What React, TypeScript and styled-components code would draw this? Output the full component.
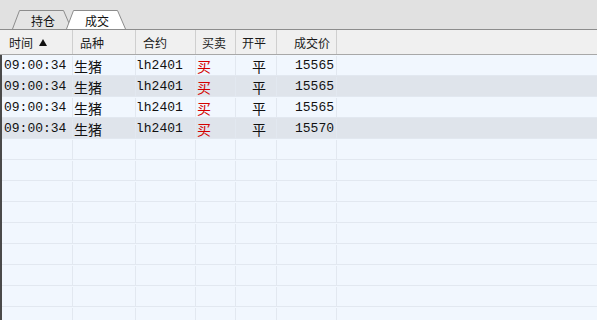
import styled, { createGlobalStyle } from "styled-components";

const GlobalStyle = createGlobalStyle`
  html, body {
    margin: 0;
    padding: 0;
    background: #eef5fd;
    overflow: hidden;
  }
  body {
    font-family: "Liberation Mono", "Noto Sans CJK SC", monospace;
  }
`;

const Panel = styled.div`
  width: 597px;
  height: 320px;
  display: flex;
  flex-direction: column;
  overflow: hidden;
`;

const TabBar = styled.div`
  height: 29px;
  background: #e1e1e1;
  border-bottom: 1px solid #8c8c8c;
  display: flex;
  align-items: flex-end;
  padding-left: 12px;
  box-sizing: content-box;
`;

const Tab = styled.div<{ $active?: boolean }>`
  position: relative;
  width: 60px;
  height: 19px;
  margin-right: -6px;
  z-index: ${(p) => (p.$active ? 2 : 1)};
  display: flex;
  align-items: center;
  justify-content: center;
  font-family: "Noto Sans CJK SC", sans-serif;
  font-size: 12px;
  color: #111;

  svg {
    position: absolute;
    inset: 0;
  }
  span {
    position: relative;
    top: 1px;
    left: 1px;
  }
`;

const TabShape = ({ active }: { active?: boolean }) => (
  <svg width="60" height="19" viewBox="0 0 60 19">
    <path
      d="M0.5 19 L7.5 0.5 L51.5 0.5 L59.5 19"
      fill={active ? "#ffffff" : "#e4e4e4"}
      stroke="#8c8c8c"
      strokeWidth="1"
    />
  </svg>
);

const HeaderRow = styled.div`
  display: flex;
  height: 24px;
  background: #f0f0f0;
  border-bottom: 1px solid #a8a8a8;
  font-family: "Noto Sans CJK SC", sans-serif;
  font-size: 12px;
  color: #1a1a1a;
`;

const HeadCell = styled.div<{ $w: number; $right?: boolean; $pl: number }>`
  width: ${(p) => p.$w}px;
  box-sizing: border-box;
  border-right: 1px solid #cfcfcf;
  display: flex;
  align-items: center;
  justify-content: ${(p) => (p.$right ? "flex-end" : "flex-start")};
  padding: 0 ${(p) => (p.$right ? "6px" : "0")} 0 ${(p) => p.$pl}px;
  gap: 6px;
`;

const Body = styled.div`
  flex: 1;
  border-left: 2px solid #4a4a4a;
  overflow: hidden;
`;

const Row = styled.div<{ $stripe?: boolean }>`
  display: flex;
  height: 21px;
  box-sizing: border-box;
  padding-top: 1px;
  border-bottom: 1px solid #e2e8f0;
  background: ${(p) => (p.$stripe ? "#dfe4eb" : "#f1f7fe")};
  font-size: 13px;
  color: #111;
`;

const Cell = styled.div<{
  $w: number;
  $align?: string;
  $red?: boolean;
  $cjk?: boolean;
  $pl: number;
}>`
  width: ${(p) => p.$w}px;
  box-sizing: border-box;
  border-right: 1px solid #e2e8f0;
  display: flex;
  align-items: center;
  justify-content: ${(p) => p.$align || "flex-start"};
  padding: 0 2px 0 ${(p) => p.$pl}px;
  font-size: ${(p) => (p.$cjk ? "14px" : "13px")};
  color: ${(p) => (p.$red ? "#d40000" : "inherit")};
  white-space: nowrap;
`;

const Filler = styled.div`
  flex: 1;
`;

const cols = [
  { key: "time", label: "时间", w: 73, align: "flex-start", pl: 2, hpl: 9, cjk: false },
  { key: "name", label: "品种", w: 63, align: "flex-start", pl: 1, hpl: 7, cjk: true },
  { key: "code", label: "合约", w: 60, align: "flex-start", pl: 0, hpl: 7, cjk: false },
  { key: "side", label: "买卖", w: 40, align: "flex-start", pl: 1, hpl: 6, cjk: true },
  { key: "open", label: "开平", w: 41, align: "center", pl: 8, hpl: 6, cjk: true },
  { key: "price", label: "成交价", w: 60, align: "flex-end", pl: 0, hpl: 0, cjk: false },
];

const trades = [
  { time: "09:00:34", name: "生猪", code: "lh2401", side: "买", open: "平", price: "15565" },
  { time: "09:00:34", name: "生猪", code: "lh2401", side: "买", open: "平", price: "15565" },
  { time: "09:00:34", name: "生猪", code: "lh2401", side: "买", open: "平", price: "15565" },
  { time: "09:00:34", name: "生猪", code: "lh2401", side: "买", open: "平", price: "15570" },
];

const SortUp = () => (
  <svg width="8" height="7" viewBox="0 0 8 7">
    <path d="M4 0 L8 7 L0 7 Z" fill="#111" />
  </svg>
);

const App = () => {
  const empty = Array.from({ length: 10 });
  return (
    <Panel>
      <GlobalStyle />
      <TabBar>
        <Tab>
          <TabShape />
          <span>持仓</span>
        </Tab>
        <Tab $active>
          <TabShape active />
          <span>成交</span>
        </Tab>
      </TabBar>
      <HeaderRow>
        {cols.map((c) => (
          <HeadCell key={c.key} $w={c.w} $pl={c.hpl} $right={c.key === "price"}>
            {c.label}
            {c.key === "time" && <SortUp />}
          </HeadCell>
        ))}
        <Filler />
      </HeaderRow>
      <Body>
        {trades.map((t, i) => (
          <Row key={i} $stripe={i % 2 === 1}>
            {cols.map((c, ci) => (
              <Cell
                key={c.key}
                $w={ci === 0 ? c.w - 2 : c.w}
                $align={c.align}
                $pl={c.pl}
                $cjk={c.cjk}
                $red={c.key === "side"}
              >
                {t[c.key as keyof typeof t]}
              </Cell>
            ))}
            <Filler />
          </Row>
        ))}
        {empty.map((_, i) => (
          <Row key={"e" + i}>
            {cols.map((c, ci) => (
              <Cell key={c.key} $w={ci === 0 ? c.w - 2 : c.w} $pl={c.pl} />
            ))}
            <Filler />
          </Row>
        ))}
      </Body>
    </Panel>
  );
};

export default App;
